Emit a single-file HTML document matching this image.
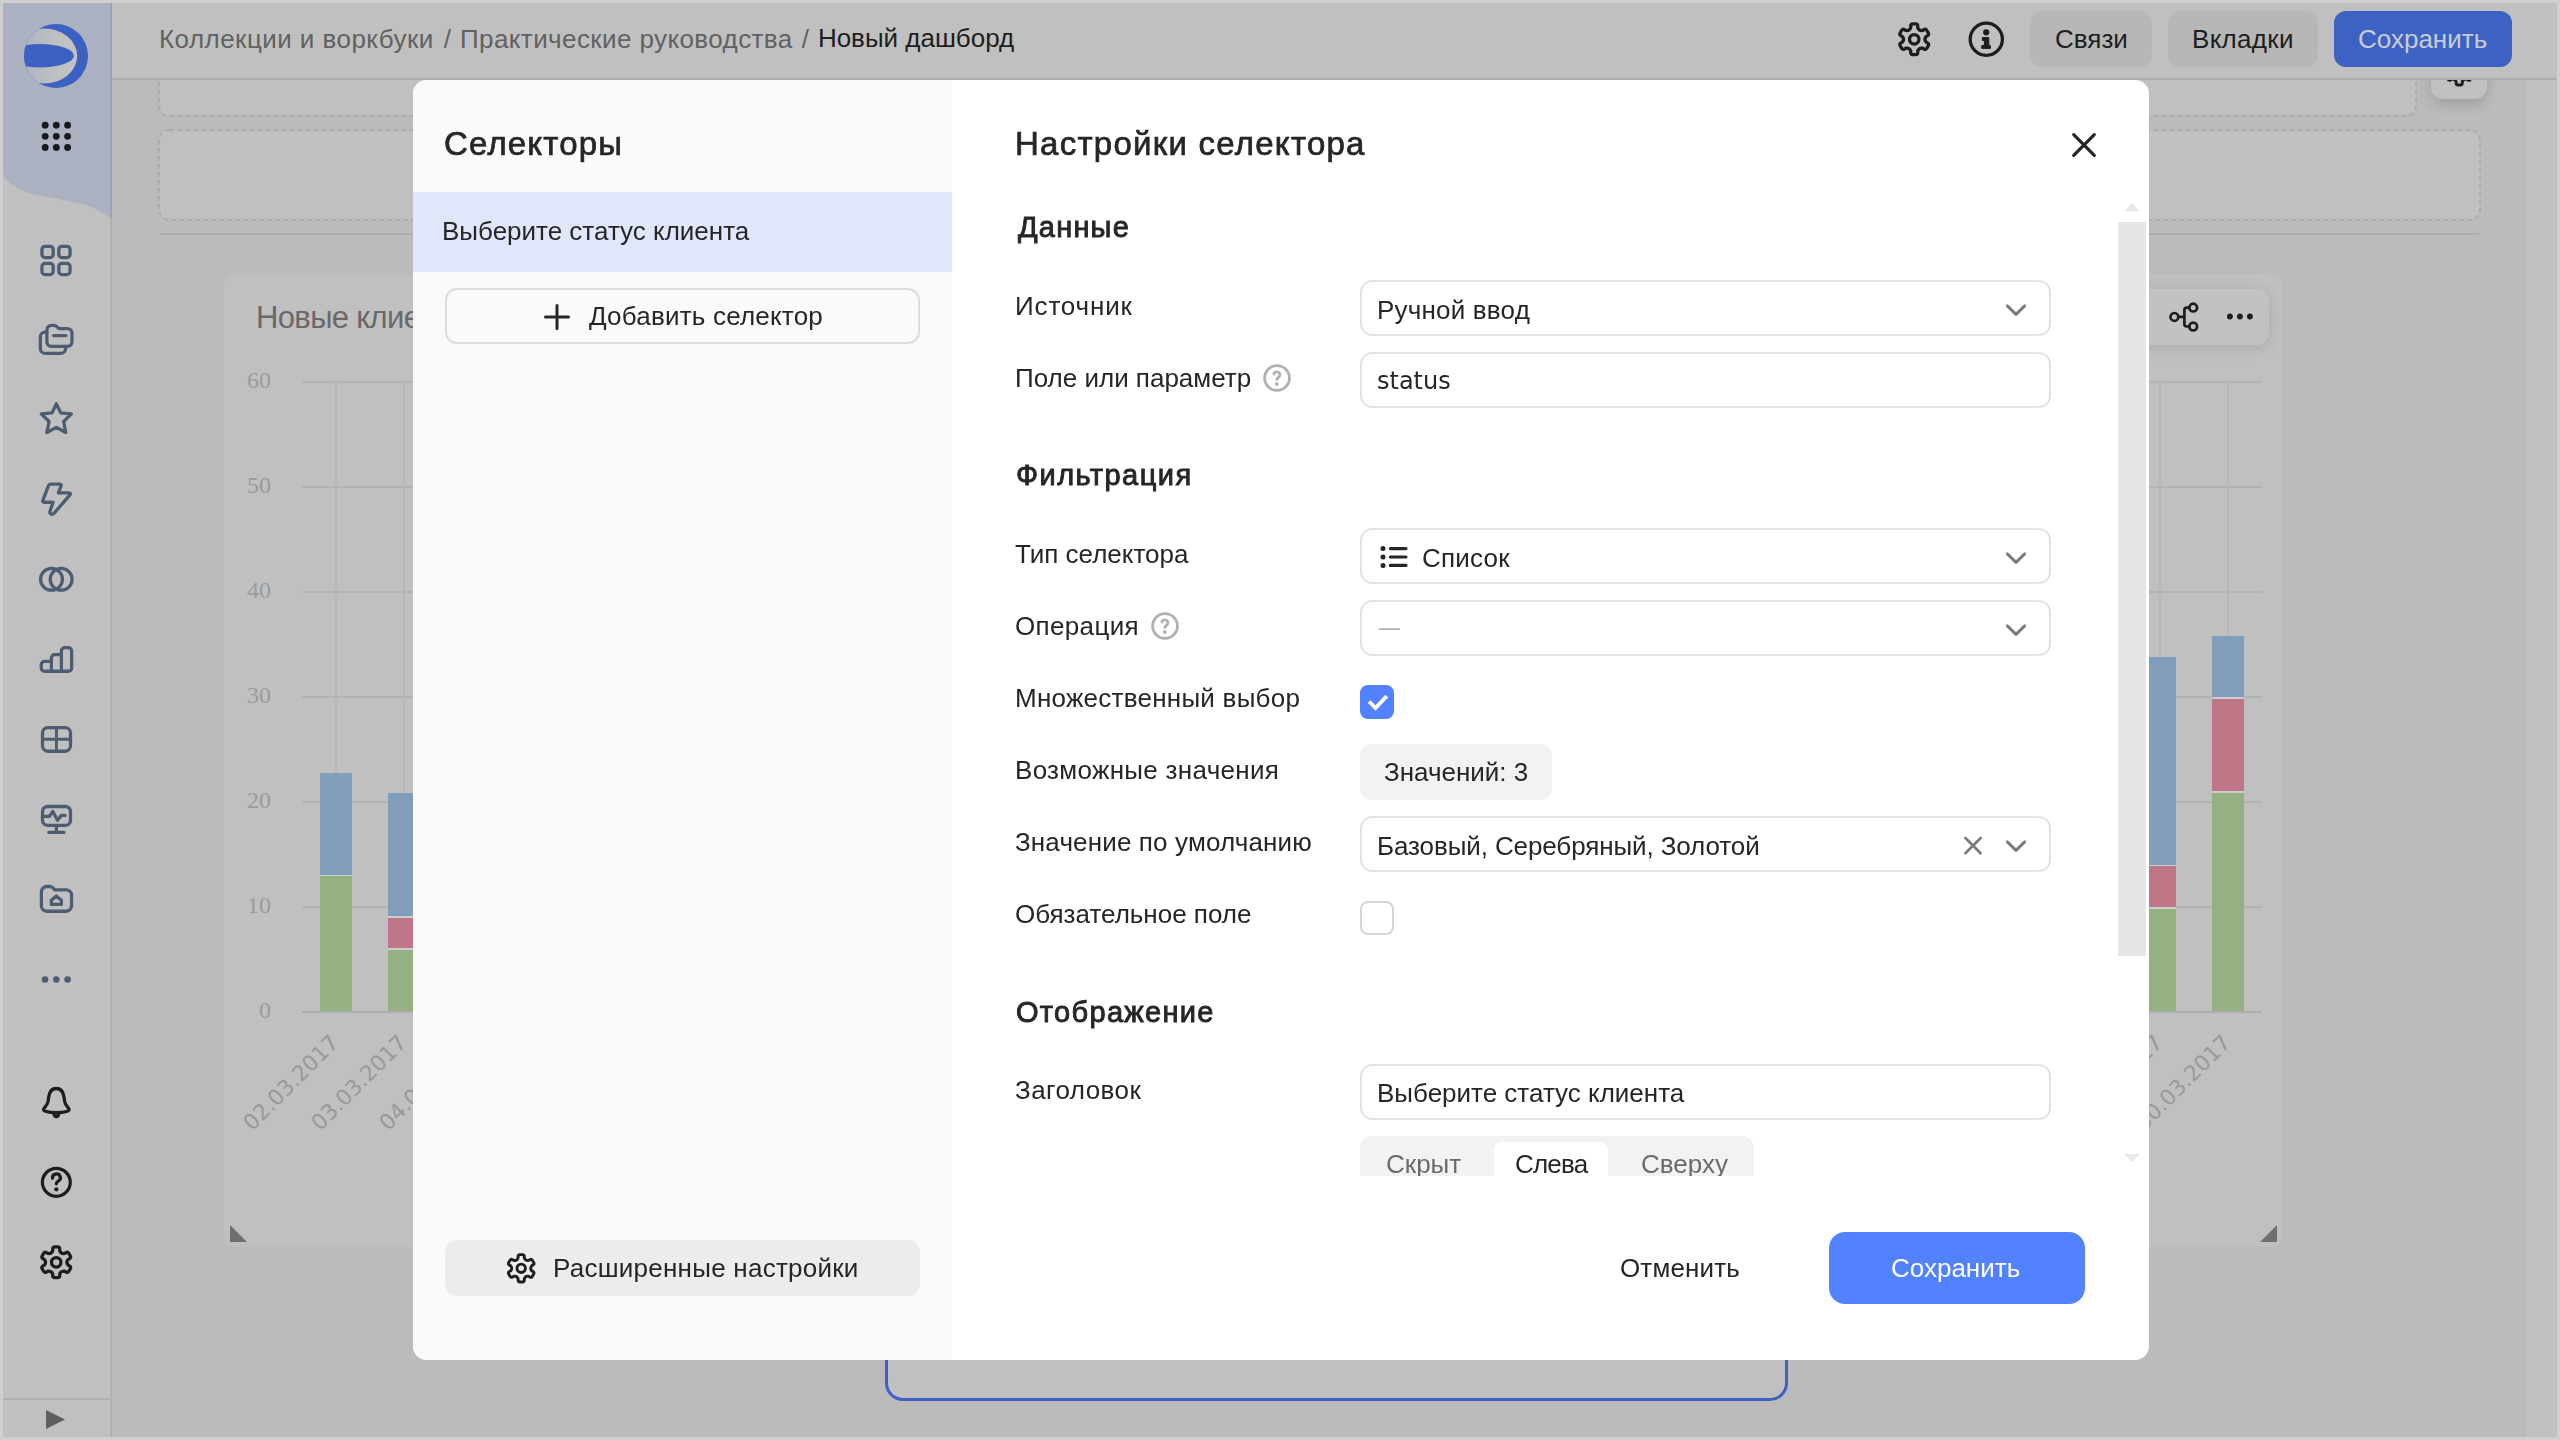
<!DOCTYPE html>
<html lang="ru">
<head>
<meta charset="utf-8">
<title>Новый дашборд</title>
<style>
*{box-sizing:border-box;margin:0;padding:0}
html,body{width:2560px;height:1440px;overflow:hidden}
body{position:relative;background:#cfcfcf;font-family:"Liberation Sans",sans-serif;color:#262626;font-size:26px;line-height:1}
.abs{position:absolute}
.t{position:absolute;white-space:nowrap;line-height:1}
#app{position:absolute;left:3px;top:3px;width:2554px;height:1434px;background:#bbbbbb;overflow:hidden}
/* everything inside #app is positioned in page coordinates via this shifted layer */
#L{position:absolute;left:-3px;top:-3px;width:2560px;height:1440px}
svg{position:absolute;overflow:visible}
.ico{fill:none;stroke:#4d5c70;stroke-width:1.45;stroke-linecap:round;stroke-linejoin:round}
.icod{fill:none;stroke:#1d1d1d;stroke-width:1.45;stroke-linecap:round;stroke-linejoin:round}
/* modal form */
.lbl{position:absolute;left:1015px;white-space:nowrap;font-size:26px;line-height:30px;color:#262626}
.ctl{position:absolute;left:1360px;width:691px;height:56px;border:2px solid #e4e4e4;border-radius:12px;background:#fff}
.ctl .v{position:absolute;left:15px;top:13px;font-size:26px;line-height:30px;white-space:nowrap;color:#262626}
.sec{position:absolute;left:1016px;white-space:nowrap;font-size:29px;line-height:34px;font-weight:400;color:#262626;-webkit-text-stroke:.9px #262626}
</style>
</head>
<body>
<div id="app"><div id="L">

<!-- ===== main content (behind overlay) ===== -->
<div id="main" class="abs" style="left:112px;top:80px;width:2445px;height:1357px;background:#bbbbbb"></div>
<div class="abs" style="left:2526px;top:80px;width:31px;height:1357px;background:#c0c0c0"></div>

<!-- dashed placeholders -->
<svg style="left:0;top:0" width="2560" height="240" viewBox="0 0 2560 240"><g fill="#c0c0c0" stroke="#acacac" stroke-width="2" stroke-dasharray="5 3"><rect x="159" y="20" width="2257" height="96" rx="10"/><rect x="159" y="130" width="2321" height="90" rx="10"/></g></svg>
<div class="abs" style="left:160px;top:233px;width:2319px;height:2px;background:#acacac"></div>
<!-- floating settings button -->
<div class="abs" style="left:2431px;top:43px;width:56px;height:56px;background:#c1c1c1;border-radius:12px;box-shadow:0 6px 14px rgba(0,0,0,.14)">
  <svg class="icod" style="left:12px;top:12px" width="32" height="32" viewBox="0 0 16 16"><path d="M6.54 3.00L6.54 2.26Q6.54 1.31 7.49 1.31L8.71 1.31Q9.66 1.31 9.66 2.26L9.66 3.00Q10.22 4.47 11.78 4.22L12.42 3.85Q13.24 3.38 13.72 4.20L14.33 5.26Q14.80 6.08 13.98 6.56L13.34 6.93Q12.35 8.15 13.34 9.37L13.98 9.74Q14.80 10.22 14.33 11.04L13.72 12.10Q13.24 12.92 12.42 12.45L11.78 12.08Q10.22 11.83 9.66 13.30L9.66 14.04Q9.66 14.99 8.71 14.99L7.49 14.99Q6.54 14.99 6.54 14.04L6.54 13.30Q5.98 11.83 4.42 12.08L3.78 12.45Q2.96 12.92 2.48 12.10L1.87 11.04Q1.40 10.22 2.22 9.74L2.86 9.37Q3.85 8.15 2.86 6.93L2.22 6.56Q1.40 6.08 1.87 5.26L2.48 4.20Q2.96 3.38 3.78 3.85L4.42 4.22Q5.97 4.47 6.54 3.00Z"/><circle cx="8.1" cy="8.15" r="2.1"/></svg>
</div>
<!-- chart card -->
<div id="card" class="abs" style="left:224px;top:275px;width:2058px;height:972px;background:#c0c0c0;border-radius:8px"></div>
<div class="t" style="left:256px;top:300px;font-size:31px;line-height:36px;color:#696969;letter-spacing:-.65px">Новые клиенты по статусам</div>
<!-- widget toolbar -->
<div class="abs" style="left:2060px;top:289px;width:209px;height:56px;background:#c2c2c2;border-radius:12px;box-shadow:0 2px 16px rgba(0,0,0,.12)"></div>
<svg style="left:2160px;top:296px" width="100" height="42" viewBox="2160 296 100 42" fill="none" stroke="#1d1d1d" stroke-width="2.7" stroke-linecap="round"><circle cx="2174.4" cy="316.9" r="3.9"/><circle cx="2193.2" cy="307.6" r="3.9"/><circle cx="2193.2" cy="326.5" r="3.9"/><path d="M2178.3 316.9H2184.4M2189.3 307.6H2186.9Q2184.4 307.6 2184.4 310.1V324Q2184.4 326.5 2186.9 326.5H2189.3"/><g fill="#1d1d1d" stroke="none"><circle cx="2229.9" cy="316.5" r="2.9"/><circle cx="2239.9" cy="316.5" r="2.9"/><circle cx="2249.9" cy="316.5" r="2.9"/></g></svg>
<!-- chart -->
<svg id="chart" style="left:0;top:0" width="2560" height="1440" viewBox="0 0 2560 1440">
  <g stroke="#b3b3b3" stroke-width="2">
    <path d="M302 382H2262M302 487H2262M302 592H2262M302 697H2262M302 802H2262M302 907H2262"/>
  </g>
  <g stroke="#b7b7b7" stroke-width="2">
    <path d="M336 382V1012M404 382V1012M2160 382V1012M2228 382V1012"/>
  </g>
  <path d="M302 1012H2262" stroke="#adadad" stroke-width="2"/>
  <!-- bars -->
  <g>
    <rect x="320" y="773" width="32" height="238" fill="#cdcdcd"/><rect x="388" y="793" width="32" height="218" fill="#cdcdcd"/><rect x="2144" y="657" width="32" height="354" fill="#cdcdcd"/><rect x="2212" y="636" width="32" height="375" fill="#cdcdcd"/>
    <rect x="320" y="773" width="32" height="102" fill="#809dbb"/>
    <rect x="320" y="876" width="32" height="135" fill="#95b081"/>
    <rect x="388" y="793" width="32" height="123" fill="#809dbb"/>
    <rect x="388" y="918" width="32" height="30" fill="#bf7686"/>
    <rect x="388" y="950" width="32" height="61" fill="#95b081"/>
    <rect x="2144" y="657" width="32" height="208" fill="#809dbb"/>
    <rect x="2144" y="866" width="32" height="41" fill="#bf7686"/>
    <rect x="2144" y="909" width="32" height="102" fill="#95b081"/>
    <rect x="2212" y="636" width="32" height="61" fill="#809dbb"/>
    <rect x="2212" y="699" width="32" height="92" fill="#bf7686"/>
    <rect x="2212" y="793" width="32" height="218" fill="#95b081"/>
  </g>
  <g font-family="'Liberation Serif',serif" font-size="24" fill="#9b9b9b" text-anchor="end">
    <text x="271" y="388">60</text><text x="271" y="493">50</text><text x="271" y="598">40</text>
    <text x="271" y="703">30</text><text x="271" y="808">20</text><text x="271" y="913">10</text><text x="271" y="1018">0</text>
  </g>
  <g font-family="'DejaVu Sans','Liberation Sans',sans-serif" font-size="21.7" fill="#999999" text-anchor="end">
    <text transform="translate(340,1044) rotate(-45)">02.03.2017</text>
    <text transform="translate(408,1044) rotate(-45)">03.03.2017</text>
    <text transform="translate(476,1044) rotate(-45)">04.03.2017</text>
    <text transform="translate(2164,1044) rotate(-45)">29.03.2017</text>
    <text transform="translate(2232,1044) rotate(-45)">30.03.2017</text>
  </g>
  <path d="M230 1225V1242H247Z" fill="#6f6f6f"/>
  <path d="M2277 1225V1242H2260Z" fill="#6f6f6f"/>
</svg>
<!-- selected widget outline at bottom -->
<div class="abs" style="left:885px;top:1300px;width:903px;height:101px;background:#c0c0c0;border:3px solid #3e62c4;border-radius:18px"></div>


<!-- ===== header ===== -->
<div id="header" class="abs" style="left:112px;top:3px;width:2445px;height:77px;background:#c0c0c0;border-bottom:2px solid #adadad"></div>
<div class="t" style="left:159px;top:24px;font-size:26px;line-height:30px;color:#616161;word-spacing:0px"><span style="letter-spacing:.45px">Коллекции и воркбуки</span><span style="padding:0 9px 0 10px">/</span><span style="letter-spacing:.4px">Практические руководства</span><span style="padding:0 9px 0 9px">/</span><span style="color:#1e1e1e;position:relative;top:-1px">Новый дашборд</span></div>
<svg class="icod" style="left:1896px;top:21px" width="36" height="36" viewBox="0 0 16 16" stroke-width="1.35"><path d="M6.54 3.00L6.54 2.26Q6.54 1.31 7.49 1.31L8.71 1.31Q9.66 1.31 9.66 2.26L9.66 3.00Q10.22 4.47 11.78 4.22L12.42 3.85Q13.24 3.38 13.72 4.20L14.33 5.26Q14.80 6.08 13.98 6.56L13.34 6.93Q12.35 8.15 13.34 9.37L13.98 9.74Q14.80 10.22 14.33 11.04L13.72 12.10Q13.24 12.92 12.42 12.45L11.78 12.08Q10.22 11.83 9.66 13.30L9.66 14.04Q9.66 14.99 8.71 14.99L7.49 14.99Q6.54 14.99 6.54 14.04L6.54 13.30Q5.98 11.83 4.42 12.08L3.78 12.45Q2.96 12.92 2.48 12.10L1.87 11.04Q1.40 10.22 2.22 9.74L2.86 9.37Q3.85 8.15 2.86 6.93L2.22 6.56Q1.40 6.08 1.87 5.26L2.48 4.20Q2.96 3.38 3.78 3.85L4.42 4.22Q5.97 4.47 6.54 3.00Z"/><circle cx="8.1" cy="8.15" r="2.1"/></svg>
<svg style="left:1968px;top:21px" width="36" height="36" viewBox="0 0 36 36"><circle cx="18.3" cy="18.2" r="16.1" fill="none" stroke="#1d1d1d" stroke-width="3.3"/><circle cx="18.2" cy="11.3" r="3.1" fill="#1d1d1d"/><path d="M14.4 16.6H20.8V24.6H22.4V27.4H13.8V24.6H16.4V19.4H14.4Z" fill="#1d1d1d" stroke="#1d1d1d" stroke-width="1" stroke-linejoin="round"/></svg>
<div class="abs" style="left:2030px;top:11px;width:122px;height:56px;border-radius:12px;background:#b7b7b7"></div><div class="t" style="left:2055px;top:24px;line-height:30px;color:#1e1e1e">Связи</div>
<div class="abs" style="left:2168px;top:11px;width:150px;height:56px;border-radius:12px;background:#b7b7b7"></div><div class="t" style="left:2192px;top:24px;line-height:30px;color:#1e1e1e;letter-spacing:.3px">Вкладки</div>
<div class="abs" style="left:2334px;top:11px;width:178px;height:56px;border-radius:12px;background:#3e62c3"></div><div class="t" style="left:2358px;top:24px;line-height:30px;color:#c8ccd6">Сохранить</div>


<!-- ===== sidebar ===== -->
<div id="aside" class="abs" style="left:3px;top:3px;width:109px;height:1434px;background:#c0c0c0"></div><div class="abs" style="left:110px;top:3px;width:1px;height:1434px;background:linear-gradient(#a2a8b7 0,#a2a8b7 214px,#b6b6b6 216px);z-index:1"></div><div class="abs" style="left:111px;top:3px;width:1px;height:1434px;background:linear-gradient(#979daa 0,#979daa 215px,#adadad 217px);z-index:1"></div>
<svg style="left:0;top:0" width="112" height="240" viewBox="0 0 112 240"><path d="M3 3H112V219C104 213.7 95.5 208.4 87.5 205.6 71.5 200.8 53.5 198.7 37.5 195.3 25.5 192.7 9 186 3 174.5Z" fill="#abb1c0"/></svg>
<svg style="left:24px;top:24px" width="64" height="64" viewBox="0 0 64 64">
<defs><linearGradient id="lg" gradientUnits="userSpaceOnUse" x1="0" y1="0" x2="64" y2="0"><stop offset="0" stop-color="#aeb4c3"/><stop offset=".6" stop-color="#c2c2c2"/><stop offset="1" stop-color="#c2c2c2"/></linearGradient>
<clipPath id="lc"><circle cx="32" cy="32" r="32"/></clipPath></defs>
<g clip-path="url(#lc)"><rect width="64" height="64" fill="#3d61c2"/>
<ellipse cx="20" cy="32" rx="33.2" ry="27.5" fill="url(#lg)"/>
<ellipse cx="16" cy="31.8" rx="34" ry="11.7" fill="#3d61c2"/></g></svg>
<svg style="left:0;top:0" width="112" height="200" viewBox="0 0 112 200" fill="#18191c"><circle cx="45.2" cy="125.2" r="3.4"/><circle cx="56.3" cy="125.2" r="3.4"/><circle cx="67.6" cy="125.2" r="3.4"/><circle cx="45.2" cy="136.3" r="3.4"/><circle cx="56.3" cy="136.3" r="3.4"/><circle cx="67.6" cy="136.3" r="3.4"/><circle cx="45.2" cy="147.5" r="3.4"/><circle cx="56.3" cy="147.5" r="3.4"/><circle cx="67.6" cy="147.5" r="3.4"/></svg>
<svg class="ico" style="left:38px;top:242px" width="36" height="36" viewBox="0 0 16 16"><rect x="1.75" y="1.9" width="5" height="5" rx="1.4"/><rect x="9.25" y="1.9" width="5" height="5" rx="1.4"/><rect x="1.75" y="9.5" width="5" height="5" rx="1.4"/><rect x="9.25" y="9.5" width="5" height="5" rx="1.4"/></svg>
<svg class="ico" style="left:38px;top:322px" width="36" height="36" viewBox="0 0 16 16"><path d="M3.95 3.45a2 2 0 0 1 2-2H7.1q.6 0 1 .45L9.3 2.9H13.1a2 2 0 0 1 2 2V8.8a2 2 0 0 1-2 2H5.95a2 2 0 0 1-2-2Z"/><path d="M3.9 4.55H3.05a2 2 0 0 0-2 2V11.9a2 2 0 0 0 2 2H10.25a2 2 0 0 0 2-2V10.8"/><path d="M6.9 6.05H12.4"/></svg>
<svg class="ico" style="left:38px;top:402px" width="36" height="36" viewBox="0 0 16 16"><path d="M8.15 .8L10.13 4.85 14.85 5.3 11.43 8.65 12.35 13.55 8.15 11.25 3.93 13.55 4.94 8.65 1.43 5.3 6.24 4.85Z"/></svg>
<svg class="ico" style="left:38px;top:482px" width="36" height="36" viewBox="0 0 16 16"><path d="M5.6 .95H9.7Q10.5 .95 10.25 1.75L9.05 4.85H13.7Q14.9 4.9 14.1 5.85L7.2 13.85Q6.4 14.7 5.6 14.1 5.1 13.7 5.35 12.9L6.7 9H2.9Q1.9 9 2.2 8.05L4.65 1.6Q4.9 .95 5.6 .95Z"/></svg>
<svg class="ico" style="left:38px;top:562px" width="36" height="36" viewBox="0 0 16 16" stroke-width="1.35"><circle cx="6" cy="7.7" r="4.85"/><circle cx="10.3" cy="7.7" r="4.85"/></svg>
<svg class="ico" style="left:38px;top:642px" width="36" height="36" viewBox="0 0 16 16"><path d="M1.45 10.1a1.45 1.45 0 0 1 1.45-1.45H5.95V7.05a1.45 1.45 0 0 1 1.45-1.45H10.4V4a1.45 1.45 0 0 1 1.45-1.45H13.5a1.45 1.45 0 0 1 1.45 1.45V11.55a1.45 1.45 0 0 1-1.45 1.45H2.9a1.45 1.45 0 0 1-1.45-1.45ZM5.95 8.65V13M10.4 5.6V13"/></svg>
<svg class="ico" style="left:38px;top:722px" width="36" height="36" viewBox="0 0 16 16"><rect x="2" y="2.45" width="12.45" height="10.55" rx="2.4"/><path d="M8.2 2.45V13M2 7.7H14.45" stroke-width="1.3"/></svg>
<svg class="ico" style="left:38px;top:802px" width="36" height="36" viewBox="0 0 16 16"><rect x="2" y="2" width="12.45" height="8.4" rx="2.3"/><path d="M8.2 10.4V13.45M4.8 13.45H11.6M2 6.35H5.05L6.6 4.2 8.65 8.1 10.4 5.95H12.05"/></svg>
<svg class="ico" style="left:38px;top:882px" width="36" height="36" viewBox="0 0 16 16"><path d="M1.5 4.4a2.4 2.4 0 0 1 2.4-2.4H5.3q.7 0 1.2.5L7.45 3.45H12.5a2.4 2.4 0 0 1 2.4 2.4V10.6a2.4 2.4 0 0 1-2.4 2.4H3.9a2.4 2.4 0 0 1-2.4-2.4Z"/><path d="M8.15 6.25L10.4 8.1V9.95H5.95V8.1Z"/></svg>
<svg style="left:0;top:960px" width="112" height="40" viewBox="0 0 112 40" fill="#4d5c70"><circle cx="45" cy="19.5" r="3.3"/><circle cx="56.3" cy="19.5" r="3.3"/><circle cx="67.6" cy="19.5" r="3.3"/></svg>
<svg class="icod" style="left:38px;top:1084px" width="36" height="36" viewBox="0 0 16 16"><path d="M8.15 2C5.9 2 5.1 3.6 4.8 5.6L4.4 8C4.2 9 3.6 9.7 3 10.4 2 11.5 2.6 12 3.6 12.2 6 12.9 10.3 12.9 12.7 12.2 13.7 12 14.3 11.5 13.3 10.4 12.7 9.7 12.1 9 11.9 8L11.5 5.6C11.2 3.6 10.4 2 8.15 2Z"/><path d="M6.3 13.2Q8.15 13.6 10 13.2 9.6 15.2 8.15 15.2 6.7 15.2 6.3 13.2Z" fill="#1d1d1d" stroke="none"/></svg>
<svg class="icod" style="left:38px;top:1164px" width="36" height="36" viewBox="0 0 16 16"><circle cx="8.15" cy="8.15" r="6.2"/><path d="M6.45 6.3A1.75 1.65 0 1 1 9.1 7.5Q8.15 8 8.15 8.8"/><circle cx="8.15" cy="11.25" r=".95" fill="#1d1d1d" stroke="none"/></svg>
<svg class="icod" style="left:38px;top:1244px" width="36" height="36" viewBox="0 0 16 16"><path d="M6.54 3.00L6.54 2.26Q6.54 1.31 7.49 1.31L8.71 1.31Q9.66 1.31 9.66 2.26L9.66 3.00Q10.22 4.47 11.78 4.22L12.42 3.85Q13.24 3.38 13.72 4.20L14.33 5.26Q14.80 6.08 13.98 6.56L13.34 6.93Q12.35 8.15 13.34 9.37L13.98 9.74Q14.80 10.22 14.33 11.04L13.72 12.10Q13.24 12.92 12.42 12.45L11.78 12.08Q10.22 11.83 9.66 13.30L9.66 14.04Q9.66 14.99 8.71 14.99L7.49 14.99Q6.54 14.99 6.54 14.04L6.54 13.30Q5.98 11.83 4.42 12.08L3.78 12.45Q2.96 12.92 2.48 12.10L1.87 11.04Q1.40 10.22 2.22 9.74L2.86 9.37Q3.85 8.15 2.86 6.93L2.22 6.56Q1.40 6.08 1.87 5.26L2.48 4.20Q2.96 3.38 3.78 3.85L4.42 4.22Q5.97 4.47 6.54 3.00Z"/><circle cx="8.1" cy="8.15" r="2.1"/></svg>
<div class="abs" style="left:3px;top:1398px;width:108px;height:1px;background:#b3b3b3"></div><div class="abs" style="left:3px;top:1399px;width:108px;height:1px;background:#adadad"></div>
<svg style="left:0;top:1400px" width="112" height="40" viewBox="0 0 112 40"><path d="M46 10V29L65 19.5Z" fill="#5e5e5e"/></svg>


<!-- ===== modal ===== -->
<div id="mlayer" class="abs" style="left:0;top:0;width:2560px;height:1440px;will-change:transform">
<div id="modal" class="abs" style="left:413px;top:80px;width:1736px;height:1280px;background:#fff;border-radius:14px;overflow:hidden">
  <div class="abs" style="left:0;top:0;width:539px;height:1280px;background:#fafafa"></div>
</div>
<div class="t" style="left:444px;top:124px;font-size:33px;line-height:40px;color:#262626;letter-spacing:1.15px;-webkit-text-stroke:.7px #262626">Селекторы</div>
<div class="abs" style="left:413px;top:192px;width:539px;height:80px;background:#e1e7fb"></div>
<div class="t" style="left:442px;top:216px;line-height:30px">Выберите статус клиента</div>
<div class="abs" style="left:445px;top:288px;width:475px;height:56px;border:2px solid #dcdcdc;border-radius:12px"></div>
<svg style="left:544px;top:304px" width="26" height="26" viewBox="0 0 26 26"><path d="M13 1.5V24.5M1.5 13H24.5" stroke="#262626" stroke-width="3" stroke-linecap="round"/></svg>
<div class="t" style="left:589px;top:301px;line-height:30px;letter-spacing:.2px">Добавить селектор</div>
<div class="abs" style="left:445px;top:1240px;width:475px;height:56px;background:#ececec;border-radius:12px"></div>
<svg class="icod" style="left:504.5px;top:1252px" width="32" height="32" viewBox="0 0 16 16" stroke-width="1.4"><path d="M6.54 3.00L6.54 2.26Q6.54 1.31 7.49 1.31L8.71 1.31Q9.66 1.31 9.66 2.26L9.66 3.00Q10.22 4.47 11.78 4.22L12.42 3.85Q13.24 3.38 13.72 4.20L14.33 5.26Q14.80 6.08 13.98 6.56L13.34 6.93Q12.35 8.15 13.34 9.37L13.98 9.74Q14.80 10.22 14.33 11.04L13.72 12.10Q13.24 12.92 12.42 12.45L11.78 12.08Q10.22 11.83 9.66 13.30L9.66 14.04Q9.66 14.99 8.71 14.99L7.49 14.99Q6.54 14.99 6.54 14.04L6.54 13.30Q5.98 11.83 4.42 12.08L3.78 12.45Q2.96 12.92 2.48 12.10L1.87 11.04Q1.40 10.22 2.22 9.74L2.86 9.37Q3.85 8.15 2.86 6.93L2.22 6.56Q1.40 6.08 1.87 5.26L2.48 4.20Q2.96 3.38 3.78 3.85L4.42 4.22Q5.97 4.47 6.54 3.00Z"/><circle cx="8.1" cy="8.15" r="2.1"/></svg>
<div class="t" style="left:553px;top:1253px;line-height:30px;letter-spacing:.25px">Расширенные настройки</div>
<div class="t" style="left:1015px;top:124px;font-size:33px;line-height:40px;color:#262626;letter-spacing:1.25px;-webkit-text-stroke:.7px #262626">Настройки селектора</div>
<svg style="left:2072px;top:133px" width="24" height="24" viewBox="0 0 24 24"><path d="M1.7 1.7L22.3 22.3M22.3 1.7L1.7 22.3" stroke="#262626" stroke-width="3.2" stroke-linecap="round"/></svg>
<div id="scroll" class="abs" style="left:960px;top:192px;width:1189px;height:984px;overflow:hidden"><div class="abs" style="left:-960px;top:-192px;width:2560px;height:1440px">
<div class="sec" style="left:1018px;top:210px;letter-spacing:1.2px">Данные</div>
<div class="lbl" style="top:291px;letter-spacing:0.85px">Источник</div>
<div class="ctl" style="top:280px"><span class="v" style="letter-spacing:.2px">Ручной ввод</span><svg style="left:642px;top:21px" width="24" height="16" viewBox="0 0 24 16"><path d="M3.3 2.9L12 11.4 20.7 2.9" fill="none" stroke="#7b7b7b" stroke-width="2.9" stroke-linecap="round" stroke-linejoin="round"/></svg></div>
<div class="lbl" style="top:363px;letter-spacing:0px">Поле или параметр</div>
<svg style="left:1263px;top:364px" width="28" height="28" viewBox="0 0 28 28"><circle cx="14" cy="14" r="12.4" fill="none" stroke="#b1b1b1" stroke-width="2.8"/><path d="M10.9 10.2A3.05 2.95 0 1 1 16 12.9Q13.8 14 13.8 15.4" fill="none" stroke="#b1b1b1" stroke-width="2.8" stroke-linecap="round"/><circle cx="13.8" cy="19.9" r="1.9" fill="#b1b1b1"/></svg>
<div class="ctl" style="top:352px"><span class="v" style="font-family:'DejaVu Sans','Liberation Sans',sans-serif;font-size:24px;left:15px;top:12px">status</span></div>
<div class="sec" style="top:458px;letter-spacing:1.45px">Фильтрация</div>
<div class="lbl" style="top:539px;letter-spacing:0px">Тип селектора</div>
<div class="ctl" style="top:528px"><span class="v" style="left:60px;letter-spacing:.2px">Список</span><svg style="left:18px;top:15px" width="30" height="24" viewBox="0 0 30 24" fill="#262626"><circle cx="3" cy="3.6" r="2.5"/><circle cx="3" cy="12" r="2.5"/><circle cx="3" cy="20.4" r="2.5"/><path d="M10.3 3.6H26M10.3 12H26M10.3 20.4H26" stroke="#262626" stroke-width="3.1" stroke-linecap="round"/></svg><svg style="left:642px;top:21px" width="24" height="16" viewBox="0 0 24 16"><path d="M3.3 2.9L12 11.4 20.7 2.9" fill="none" stroke="#7b7b7b" stroke-width="2.9" stroke-linecap="round" stroke-linejoin="round"/></svg></div>
<div class="lbl" style="top:611px;letter-spacing:0.35px">Операция</div>
<svg style="left:1151px;top:612px" width="28" height="28" viewBox="0 0 28 28"><circle cx="14" cy="14" r="12.4" fill="none" stroke="#b1b1b1" stroke-width="2.8"/><path d="M10.9 10.2A3.05 2.95 0 1 1 16 12.9Q13.8 14 13.8 15.4" fill="none" stroke="#b1b1b1" stroke-width="2.8" stroke-linecap="round"/><circle cx="13.8" cy="19.9" r="1.9" fill="#b1b1b1"/></svg>
<div class="ctl" style="top:600px"><span class="v" style="color:#b0b0b0;top:10px;left:17px;transform:scaleX(.81);transform-origin:0 50%">—</span><svg style="left:642px;top:21px" width="24" height="16" viewBox="0 0 24 16"><path d="M3.3 2.9L12 11.4 20.7 2.9" fill="none" stroke="#7b7b7b" stroke-width="2.9" stroke-linecap="round" stroke-linejoin="round"/></svg></div>
<div class="lbl" style="top:683px;letter-spacing:0.25px">Множественный выбор</div>
<div class="abs" style="left:1360px;top:685px;width:34px;height:34px;border-radius:8px;background:#5282ff"></div><svg style="left:1360px;top:685px" width="34" height="34" viewBox="0 0 34 34"><path d="M9.1 16.5L15.5 23 26.7 11.1" fill="none" stroke="#fff" stroke-width="3.8"/></svg>
<div class="lbl" style="top:755px;letter-spacing:0.3px">Возможные значения</div>
<div class="abs" style="left:1360px;top:744px;width:192px;height:56px;border-radius:12px;background:#f2f2f2"></div><div class="t" style="left:1384px;top:757px;line-height:30px">Значений: 3</div>
<div class="lbl" style="top:827px;letter-spacing:0.15px">Значение по умолчанию</div>
<div class="ctl" style="top:816px"><span class="v" style="letter-spacing:-.1px">Базовый, Серебряный, Золотой</span><svg style="left:600px;top:17px" width="22" height="22" viewBox="0 0 22 22"><path d="M3.4 3L18.6 18.2M18.6 3L3.4 18.2" stroke="#7b7b7b" stroke-width="2.7" stroke-linecap="round"/></svg><svg style="left:642px;top:21px" width="24" height="16" viewBox="0 0 24 16"><path d="M3.3 2.9L12 11.4 20.7 2.9" fill="none" stroke="#7b7b7b" stroke-width="2.9" stroke-linecap="round" stroke-linejoin="round"/></svg></div>
<div class="lbl" style="top:899px;letter-spacing:0px">Обязательное поле</div>
<div class="abs" style="left:1360px;top:901px;width:34px;height:34px;border-radius:8px;border:2px solid #d6d6d6;background:#fff"></div>
<div class="sec" style="top:995px;letter-spacing:1.3px">Отображение</div>
<div class="lbl" style="top:1075px;letter-spacing:0.45px">Заголовок</div>
<div class="ctl" style="top:1064px"><span class="v" style="top:12px">Выберите статус клиента</span></div>
<div class="abs" style="left:1360px;top:1136px;width:394px;height:56px;border-radius:12px;background:#f2f2f2"></div>
<div class="abs" style="left:1494px;top:1142px;width:114px;height:44px;border-radius:8px;background:#fff"></div>
<div class="t" style="left:1386px;top:1149px;line-height:30px;color:#6b6b6b">Скрыт</div><div class="t" style="left:1515px;top:1149px;line-height:30px;letter-spacing:-.8px">Слева</div><div class="t" style="left:1641px;top:1149px;line-height:30px;color:#6b6b6b">Сверху</div>
</div></div>
<div class="abs" style="left:2118px;top:222px;width:28px;height:734px;background:#e6e6e6"></div>
<svg style="left:2118px;top:192px" width="30" height="30" viewBox="0 0 30 30"><path d="M6.5 19.5L14 11 21.5 19.5Z" fill="#e9e9e9"/></svg>
<svg style="left:2118px;top:1146px" width="30" height="30" viewBox="0 0 30 30"><path d="M6.5 8L14 16.5 21.5 8Z" fill="#e9e9e9"/></svg>
<div class="t" style="left:1620px;top:1253px;line-height:30px;letter-spacing:.15px">Отменить</div>
<div class="abs" style="left:1829px;top:1232px;width:256px;height:72px;border-radius:16px;background:#5282ff"></div><div class="t" style="left:1891px;top:1253px;line-height:30px;color:#fff">Сохранить</div>

</div>

</div></div>
</body>
</html>
